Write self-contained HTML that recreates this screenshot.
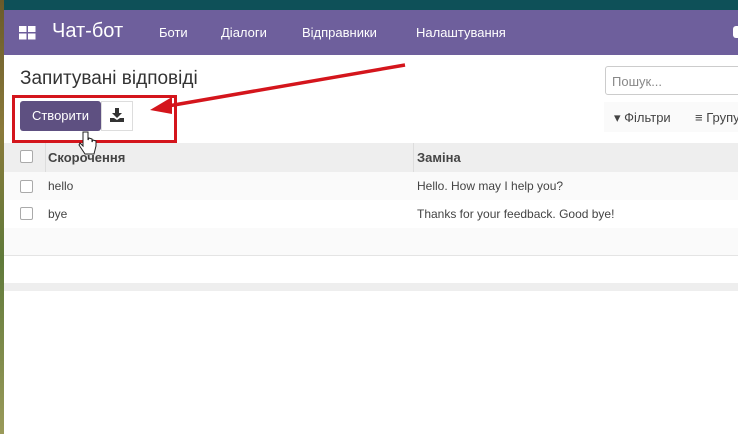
<!DOCTYPE html>
<html><head><meta charset="utf-8"><style>
body{margin:0;width:738px;height:434px;overflow:hidden;background:#fff;font-family:"Liberation Sans",sans-serif;position:relative}
.a{position:absolute;white-space:nowrap}
</style></head><body>
<div class="a" style="left:0;top:0;width:738px;height:10px;background:#0e5058"></div>
<div class="a" style="left:0;top:0;width:4px;height:434px;background:linear-gradient(#6a5a2a,#8a7a3a 30%,#5f7a3a 60%,#9a9a5a)"></div>
<div class="a" style="left:4px;top:10px;width:734px;height:45px;background:#6e5f9c"></div>
<svg class="a" style="left:19px;top:26px" width="17" height="14"><rect x="0" y="0" width="7.5" height="6" fill="#fff"/><rect x="9" y="0" width="7.5" height="6" fill="#fff"/><rect x="0" y="7.5" width="7.5" height="6" fill="#fff"/><rect x="9" y="7.5" width="7.5" height="6" fill="#fff"/></svg>
<div class="a" style="left:52px;top:20px;color:#fff;font-size:20px">Чат-бот</div>
<div class="a" style="left:159px;top:25px;color:#fff;font-size:13px">Боти</div>
<div class="a" style="left:221px;top:25px;color:#fff;font-size:13px">Діалоги</div>
<div class="a" style="left:302px;top:25px;color:#fff;font-size:13px">Відправники</div>
<div class="a" style="left:416px;top:25px;color:#fff;font-size:13px">Налаштування</div>
<div class="a" style="left:733px;top:26px;width:5px;height:12px;background:#fff;border-radius:3px 0 0 3px"></div>
<div class="a" style="left:20px;top:68px;color:#333;font-size:19px">Запитувані відповіді</div>
<div class="a" style="left:605px;top:66px;width:140px;height:29px;border:1px solid #ccc;border-radius:3px;box-sizing:border-box;color:#888;font-size:13px;padding:7px 6px">Пошук...</div>
<div class="a" style="left:604px;top:102px;width:134px;height:30px;background:#fafafa"></div>
<div class="a" style="left:614px;top:110px;color:#444;font-size:13px">▾ Фільтри</div>
<div class="a" style="left:695px;top:110px;color:#444;font-size:13px">≡ Групу</div>
<div class="a" style="left:20px;top:101px;width:81px;height:30px;background:#5e5081;border-radius:3px;color:#fff;font-size:13px;text-align:center;line-height:30px">Створити</div>
<div class="a" style="left:101px;top:101px;width:32px;height:30px;border:1px solid #ddd;box-sizing:border-box;background:#fff"></div>
<svg class="a" style="left:110px;top:108px" width="14" height="14"><path d="M5 0h4v5h3l-5 5-5-5h3z" fill="#333"/><path d="M0 10h4l3 2 3-2h4v4H0z" fill="#333"/></svg>
<div class="a" style="left:12px;top:95px;width:165px;height:48px;border:3px solid #d4151c;box-sizing:border-box"></div>
<svg class="a" style="left:0;top:0" width="738" height="434"><line x1="405" y1="65" x2="168" y2="106" stroke="#d4151c" stroke-width="3.5"/><path d="M150 110 L172 97 L172 114 Z" fill="#d4151c"/></svg>
<div class="a" style="left:4px;top:143px;width:734px;height:29px;background:#eee"></div>
<div class="a" style="left:45px;top:143px;width:1px;height:29px;background:#ddd"></div>
<div class="a" style="left:413px;top:143px;width:1px;height:29px;background:#ddd"></div>
<div class="a" style="left:48px;top:150px;color:#444;font-size:13px;font-weight:bold">Скорочення</div>
<div class="a" style="left:417px;top:150px;color:#444;font-size:13px;font-weight:bold">Заміна</div>
<div class="a" style="left:4px;top:172px;width:734px;height:28px;background:#fafafa;border-bottom:1px solid #e4e4e4"></div>
<div class="a" style="left:4px;top:200px;width:734px;height:28px;background:#fff;border-bottom:1px solid #e4e4e4"></div>
<div class="a" style="left:4px;top:228px;width:734px;height:27px;background:#fafafa;border-bottom:1px solid #e4e4e4"></div>
<div class="a" style="left:4px;top:283px;width:734px;height:8px;background:#eee"></div>
<div class="a" style="left:20px;top:150px;width:11px;height:11px;border:1px solid #aaa;border-radius:2px;background:#fff"></div>
<div class="a" style="left:20px;top:180px;width:11px;height:11px;border:1px solid #aaa;border-radius:2px;background:#fff"></div>
<div class="a" style="left:20px;top:207px;width:11px;height:11px;border:1px solid #aaa;border-radius:2px;background:#fff"></div>
<div class="a" style="left:48px;top:179px;color:#444;font-size:12px">hello</div>
<div class="a" style="left:417px;top:179px;color:#444;font-size:12px">Hello. How may I help you?</div>
<div class="a" style="left:48px;top:207px;color:#444;font-size:12px">bye</div>
<div class="a" style="left:417px;top:207px;color:#444;font-size:12px">Thanks for your feedback. Good bye!</div>
<svg class="a" style="left:78px;top:130px" width="20" height="28"><path d="M5 2v14l-3-3-1 2 6 9h9l2-8v-5l-3-1-1 2v-3l-3-1-1 2V2z" fill="#fff" stroke="#222" stroke-width="1"/></svg>
</body></html>
